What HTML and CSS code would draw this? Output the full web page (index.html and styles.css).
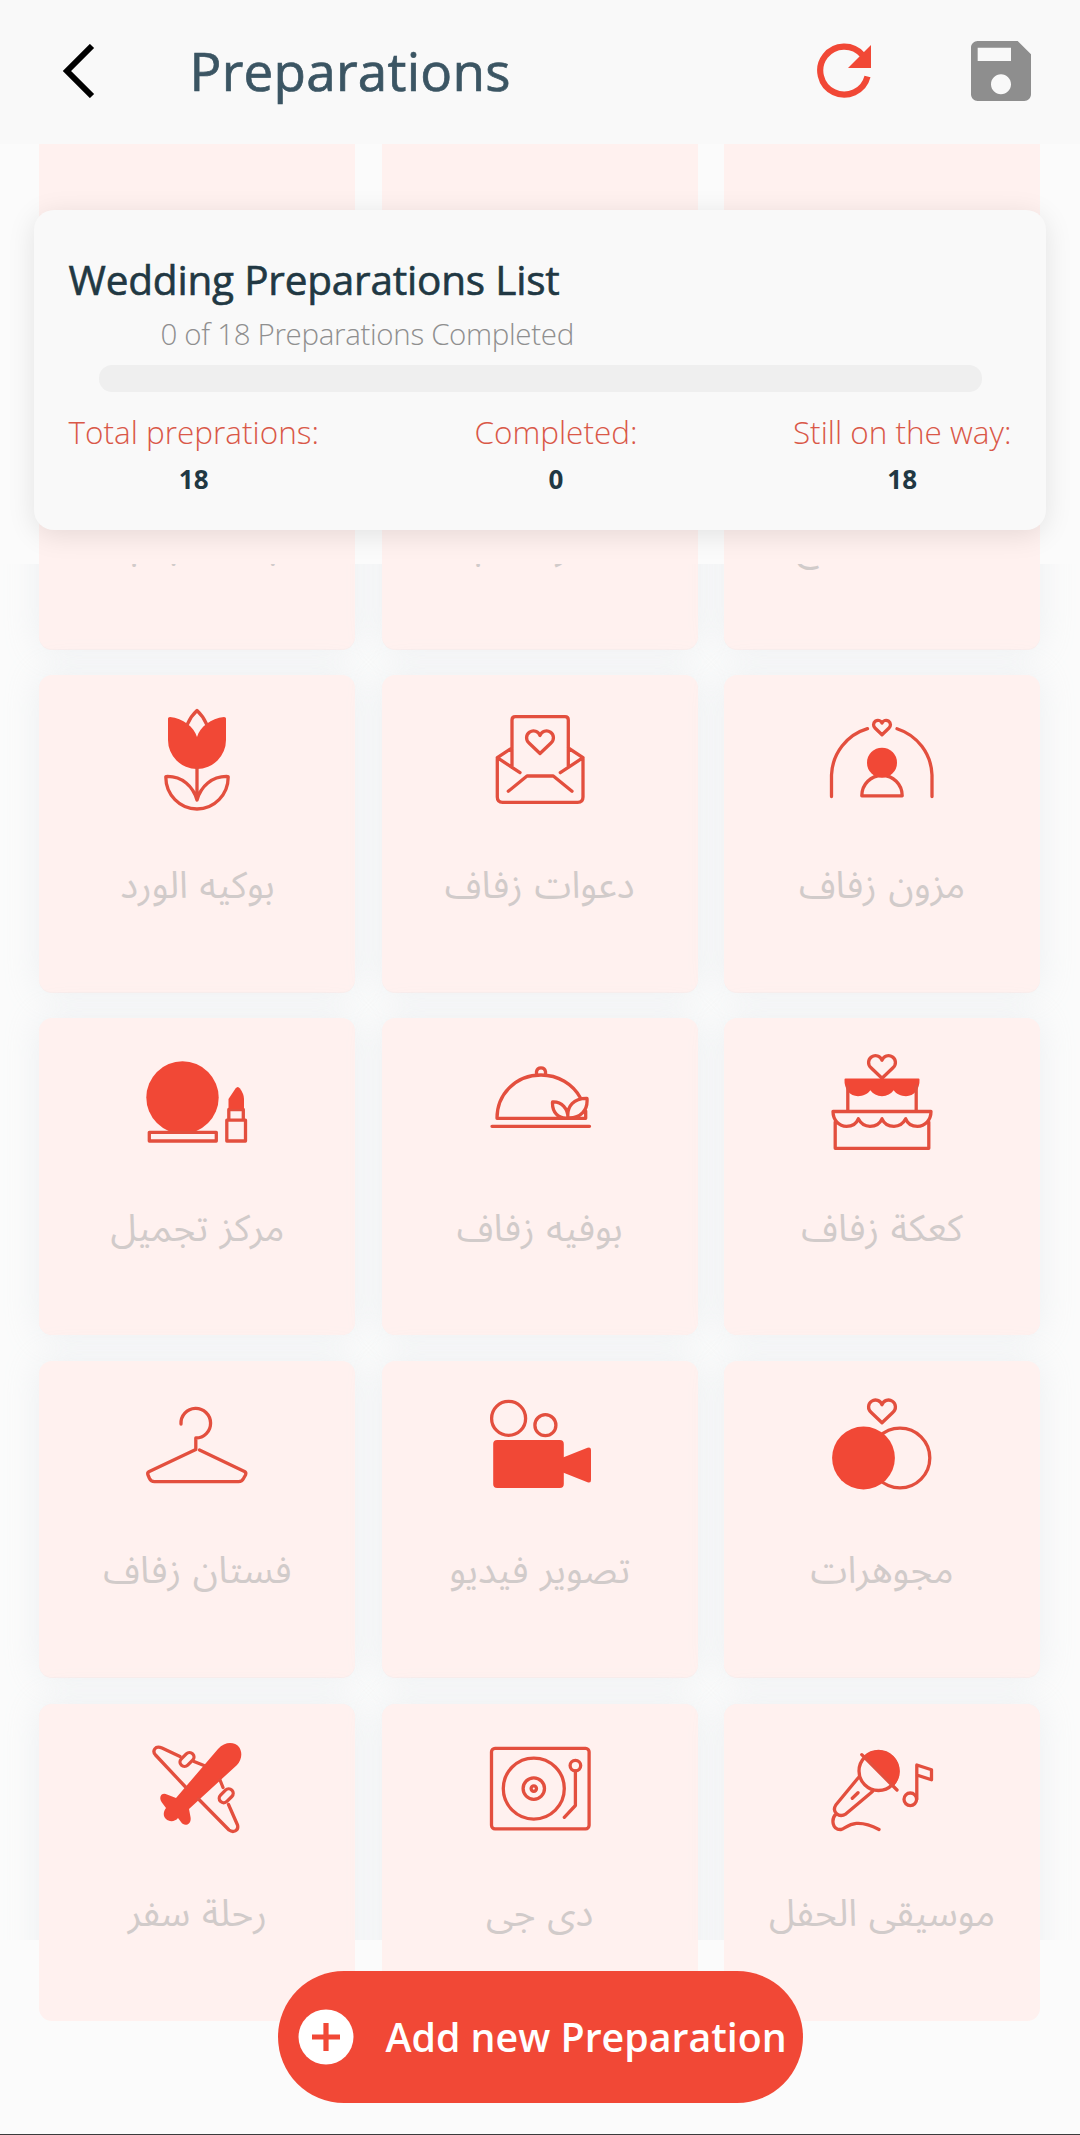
FILE: index.html
```html
<!DOCTYPE html>
<html lang="en">
<head>
<meta charset="utf-8">
<title>Preparations</title>
<link rel="stylesheet" href="styles.css">
</head>
<body>
<svg class="defs" width="0" height="0">
  <symbol id="heart" overflow="visible"><path d="M0 0A6.9 6.9 0 1 0-11 7.500L0 18 11 7.500A6.900 6.900 0 1 0 0 0Z"/></symbol>
</svg>
<div class="screen">
  <header class="bar">
    <svg class="back" viewBox="0 0 34 54"><path d="M30 2 5 27 30 52" fill="none" stroke="#000" stroke-width="6"/></svg>
    <h1 class="bar-title">Preparations</h1>
    <svg class="refresh" viewBox="0 0 56 56"><path d="M50.500 33.500A24 24 0 1 1 45.500 12" fill="none" stroke="#f14836" stroke-width="6.200"/><path d="M54 2V25H31Z" fill="#f14836"/></svg>
    <svg class="save" viewBox="3 3 18 18"><path fill="#8e8e8e" d="M17 3H5c-1.110 0-2 .9-2 2v14c0 1.100.89 2 2 2h14c1.100 0 2-.9 2-2V7l-4-4zm-5 16c-1.660 0-3-1.340-3-3s1.340-3 3-3 3 1.340 3 3-1.340 3-3 3zm3-10H5V5h10v4z"/></svg>
  </header>

  <main class="stage">
    <div class="grid tiles">
      <i></i><i></i><i></i><i></i><i></i><i></i><i></i><i></i><i></i><i></i><i></i><i></i><i></i><i></i><i></i><i></i><i></i><i></i>
    </div>

    <div class="list">
      <div class="grid cards" lang="ar">
        <div class="card low"><div class="icon"></div><p dir="rtl">بدلة حجاب</p></div>
        <div class="card low"><div class="icon"></div><p dir="rtl">دفتر الحب</p></div>
        <div class="card"><div class="icon"></div><p dir="rtl">قاعة الأفراح</p></div>

        <div class="card">
          <svg class="icon" viewBox="0 0 120 120"><path class="f" d="M31 23.500Q31 22 33 22C46 23 57 32 60 42 63 32 74 23 87 22Q89 22 89 23.500V45A29 29 0 0 1 31 45Z"/><path d="M50.500 29Q54 21 60 15.500 66 21 69.500 29M60 73V105M28.800 82C28.800 81.500 30 81.400 30.500 81.400 45 81.400 56 91 60 105 64 91 75 81.400 89.500 81.400 90 81.400 91.200 81.500 91.200 82A31.200 32 0 0 1 28.800 82Z"/></svg>
          <p dir="rtl">بوكيه الورد</p>
        </div>
        <div class="card">
          <svg class="icon" viewBox="0 0 120 120"><path d="M32 72.500V25Q32 21.700 35.300 21.700H85Q88.300 21.700 88.300 25V72.500M32 53 17.300 62.700V102Q17.300 107.300 22.600 107.300H97.700Q103 107.300 103 102V62.700L88.300 53M17.300 62.700 40 77.700M103 62.700 80.300 77.700M28.300 96.300 47 81H73.300L92 96.300"/><use href="#heart" x="60" y="40.500"/></svg>
          <p dir="rtl">دعوات زفاف</p>
        </div>
        <div class="card">
          <svg class="icon" viewBox="0 0 120 120"><path d="M9.500 101.500V80A50.300 50.300 0 0 1 45.500 33.700M110 101.500V80A50.300 50.300 0 0 0 75 33.700M60 28A4.400 4.400 0 1 0 53 33L60 39.700 67 33A4.400 4.400 0 1 0 60 28ZM39.800 100.800C39.800 89 49 80.500 60 80.500S80.200 89 80.200 100.800Z"/><circle class="f" cx="60" cy="67.700" r="15"/></svg>
          <p dir="rtl">مزون زفاف</p>
        </div>

        <div class="card">
          <svg class="icon" viewBox="0 0 120 120"><circle class="f" cx="45.500" cy="59.500" r="36.200"/><rect class="p" x="12.300" y="94.300" width="67" height="8.700"/><path d="M89.800 82.200H108.500V103H89.800ZM91.800 71.500H106.300V82.200H91.800Z"/><path class="f" d="M91.500 71V61L98.500 50.500Q100.700 47.500 103 50.500 107 56 107 61V71Z"/></svg>
          <p dir="rtl">مركز تجميل</p>
        </div>
        <div class="card">
          <svg class="icon" viewBox="0 0 120 120"><path d="M100.500 60C93 46 78 37 61 37 36 37 17 56 17 80.300H105.700V73M56.500 37V33.500A4.600 4.600 0 0 1 65.500 33.500V37M12 88.300H109.500M107 60.300C94 60 86.500 68 88 80 101 80.500 108 72 107 60.300ZM72.500 64C82 63.500 88 71 88 80 78 81 72 74 72.500 64Z"/></svg>
          <p dir="rtl">بوفيه زفاف</p>
        </div>
        <div class="card">
          <svg class="icon" viewBox="0 0 120 120"><use href="#heart" x="60" y="22.300"/><path class="f" d="M22.500 41.500Q22.500 40.500 23.500 40.500H96.500Q97.500 40.500 97.500 41.500C98 51 92 58.200 84 58.200 79 58.200 74 56 71.700 52.300 69 56 65 58.200 60 58.200S51 56 48.300 52.300C46 56 41 58.200 36 58.200 28 58.200 22 51 22.500 41.500Z"/><path d="M25.800 48V73M94.200 48V73M11 73.500H109C109 82 103 88.300 95.500 88.300 90 88.300 85.500 85.500 83.700 80.800 81 86 77 88.300 72 88.300 66 88.300 62 85.500 60 80.800 58 85.500 54 88.300 48 88.300 43 88.300 39 86 36.300 80.800 34.500 85.500 30 88.300 24.500 88.300 17 88.300 11 82 11 73.500ZM13.200 84V110.300H106.800V84"/></svg>
          <p dir="rtl">كعكة زفاف</p>
        </div>

        <div class="card">
          <svg class="icon" viewBox="0 0 120 120"><path d="M44 43A14.800 14.800 0 1 1 58.800 57V68.500L12.300 90.500Q10 91.700 11 94L12.500 97.500Q14 100.600 17.500 100.600H101.500Q105 100.600 106.500 97.500L108.500 94Q109.500 91.700 107.500 90.500L62.500 69"/></svg>
          <p dir="rtl">فستان زفاف</p>
        </div>
        <div class="card">
          <svg class="icon" viewBox="0 0 120 120"><circle cx="28.600" cy="37.400" r="17"/><circle cx="65.400" cy="44.200" r="10.500"/><rect class="f" x="13.200" y="59" width="70.600" height="48" rx="4"/><path class="f" d="M83 76.500 107.500 66.800Q111 65.500 111 69V99Q111 102.500 107.500 101.200L83 91.500Z"/></svg>
          <p dir="rtl">تصوير فيديو</p>
        </div>
        <div class="card">
          <svg class="icon" viewBox="0 0 120 120"><use href="#heart" x="60" y="23.700"/><circle cx="78" cy="77" r="29.800"/><circle class="f" cx="41.500" cy="77" r="31.400"/></svg>
          <p dir="rtl">مجوهرات</p>
        </div>

        <div class="card">
          <svg class="icon" viewBox="0 0 120 120"><path class="f" d="M81 25C88 17 98 18 102 23 106 29 104.500 36 100 41L52 85 53.500 93C55 101 47 103 44 98L41 94C38 98 32 98 29 95 26 92 26 88 29 84L26 80C20 73 25 68 30 70.500L39 74Z"/><path d="M67 41.500 57 37.500M43 32.500 25 24C18 21 15 27 18.500 31L49 63.500M83 56 86 63.500M91.500 80.500 100.500 101C102 107 96 109 92 106L61.500 75"/><rect x="45.500" y="27.500" width="9" height="16" rx="4.500" transform="rotate(45 50 35.500)"/><rect x="84.700" y="63.800" width="9" height="16" rx="4.500" transform="rotate(45 89.200 71.800)"/></svg>
          <p dir="rtl">رحلة سفر</p>
        </div>
        <div class="card">
          <svg class="icon" viewBox="0 0 120 120"><rect x="11.500" y="24.300" width="97.600" height="80.500" rx="3.500"/><circle cx="53.800" cy="64.600" r="30.500"/><circle cx="53.800" cy="64.600" r="10.700"/><circle cx="53.800" cy="64.600" r="2.700"/><circle cx="95.400" cy="41.600" r="5.300"/><path d="M95.400 47V81.500L84.300 93.300"/></svg>
          <p dir="rtl">دى جى</p>
        </div>
        <div class="card">
          <svg class="icon" viewBox="0 0 120 120"><circle cx="56.500" cy="47" r="19.500"/><path class="f" d="M41.500 32.500A21 21 0 0 1 71.500 62.500Z"/><path d="M39.800 30.700 75 66M36.500 53.500 13.800 81C9.500 88 17 94.500 24 89.800L50.500 67.500M30.300 74.300 36 68.700M14 90C9 95 10 106 19 105.500 24 105 31 92 57 105.500"/><circle cx="88.300" cy="75.300" r="6.300"/><path d="M94.800 75V41L109.500 45.700V55.800L94.800 51"/></svg>
          <p dir="rtl">موسيقى الحفل</p>
        </div>
      </div>
    </div>

    <section class="summary">
      <h2>Wedding Preparations List</h2>
      <p class="progress-text">0 of 18 Preparations Completed</p>
      <div class="track"></div>
      <div class="stats">
        <div class="stat"><span class="lab">Total preprations:</span><b>18</b></div>
        <div class="stat"><span class="lab">Completed:</span><b>0</b></div>
        <div class="stat"><span class="lab">Still on the way:</span><b>18</b></div>
      </div>
    </section>

    <button class="add">
      <svg viewBox="0 0 56 56"><circle cx="28" cy="28" r="27.500" fill="#fff"/><path d="M28 14V42M14 28H42" stroke="#f14836" stroke-width="5.200"/></svg>
      <span>Add new Preparation</span>
    </button>
  </main>
</div>
</body>
</html>
```
FILE: styles.css
```css
* { box-sizing: border-box; }
body { margin: 0; background: #fbfbfb; font-family: "Open Sans", "Noto Sans", sans-serif; }
h1, h2, p { margin: 0; }
.defs { position: absolute; }

.screen { display: flex; flex-direction: column; width: 1080px; height: 2135px; overflow: hidden; border-bottom: 1px solid #3c3c3c; }

/* Top bar */
.bar { display: flex; align-items: center; flex: none; height: 144px; padding: 0 49px 2px 62px; background: #f9f9f9; }
.back { width: 34px; height: 54px; }
.bar-title { margin-left: 93.500px; color: #3b5563; font-size: 53px; font-weight: 400; line-height: 70px; letter-spacing: .25px; -webkit-text-stroke: .7px #3b5563; }
.refresh { width: 56px; height: 56px; margin-left: auto; }
.save { width: 60px; height: 60px; margin-left: 98px; }

/* Scrolling area with its floating panels */
.stage { position: relative; flex: 1; overflow: hidden; }
.grid { display: grid; grid-template-columns: repeat(3, 316px); grid-auto-rows: 316.500px; gap: 26.300px; padding: 0 39.400px; }
.tiles { margin-top: -153.500px; }
.tiles i { border-radius: 13px; background: #fff1ef; }
.list { position: absolute; top: 420px; left: 0; width: 1080px; height: 1376px; overflow: hidden; }
.cards { margin-top: -231.500px; }
.card { display: flex; flex-direction: column; align-items: center; padding-top: 20px; border-radius: 13px; background: #fff1ef; box-shadow: 0 0 34px rgba(205, 214, 222, .3); }
.icon { flex: none; width: 120px; height: 120px; fill: none; stroke: #e34f3e; stroke-width: 3.300; stroke-linecap: round; stroke-linejoin: round; }
.icon .f { fill: #f14836; stroke: none; }
.icon .p { fill: #fff1ef; }
.card p { margin-top: 41.500px; color: #d1cbca; font-family: "Noto Sans Arabic", "Noto Naskh Arabic", "Open Sans", "DejaVu Sans", sans-serif; font-size: 37.300px; line-height: 60px; font-kerning: none; word-spacing: 2px; white-space: nowrap; }
.card.low p { margin-top: 45px; }

/* Summary panel */
.summary { position: absolute; top: 66px; left: 34px; display: flex; flex-direction: column; width: 1012px; height: 320px; padding: 42px 34.500px 0; border-radius: 20px; background: #f9f9f9; box-shadow: 0 5px 28px rgba(0, 0, 0, .1); }
.summary h2 { color: #213843; font-size: 40.500px; font-weight: 400; line-height: 56px; letter-spacing: -.2px; -webkit-text-stroke: .6px #213843; }
.progress-text { padding-left: 92px; color: #8f8f8f; font-size: 29.500px; font-weight: 300; line-height: 42px; letter-spacing: -.33px; margin-top: 4.500px; }
.track { height: 27px; margin: 10px 30px 0; border-radius: 13px; background: #efefef; }
.stats { display: flex; justify-content: space-between; margin-top: 18px; }
.stat { display: flex; flex-direction: column; align-items: center; }
.lab { color: #d95848; font-size: 31.500px; font-weight: 300; line-height: 44px; }
.stat b { color: #213843; font-size: 26px; font-weight: 700; line-height: 36px; margin-top: 7px; }

/* Floating action */
.add { position: absolute; left: 277.500px; top: 1827px; display: flex; align-items: center; width: 525px; height: 131.500px; padding: 1px 0 0 20px; border: 0; border-radius: 66px; background: #f14836; color: #fff; font: 600 39.300px "Open Sans", sans-serif; white-space: nowrap; }
.add svg { flex: none; width: 56px; height: 56px; }
.add span { margin-left: 32px; }
```
